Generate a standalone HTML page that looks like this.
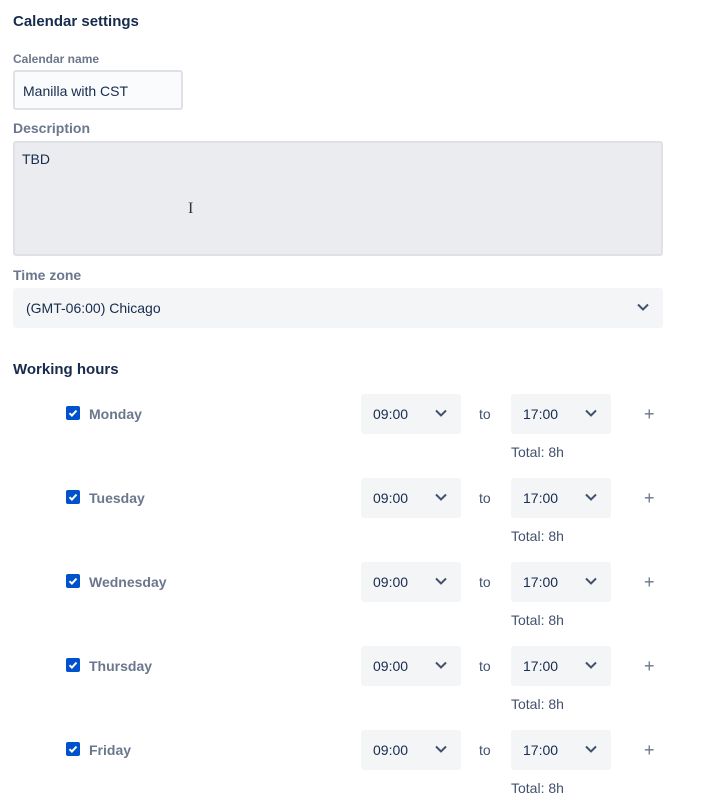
<!DOCTYPE html><html><head><style>
body{margin:0;width:708px;height:807px;background:#fff;font-family:"Liberation Sans",sans-serif;color:#172b4d;position:relative;overflow:hidden}
.a{position:absolute}
h{position:absolute;font-size:15px;font-weight:bold;color:#172b4d}
.lab{position:absolute;font-size:12px;font-weight:bold;color:#6b778c}
.sel{position:absolute;width:100px;height:40px;background:#f4f5f7;border-radius:3px;font-size:14px;line-height:40px}
.sel span{position:absolute;left:12px}
.sel svg,.tz svg{position:absolute;right:14px;top:15px}
.cb{position:absolute;left:66px;width:14px;height:14px;background:#0052cc;border-radius:2px}
.day{position:absolute;left:89px;font-size:14px;font-weight:bold;color:#6b778c}
.to{position:absolute;left:479px;font-size:14px;color:#42526e}
.tot{position:absolute;left:511px;font-size:14px;color:#42526e}
.plus{position:absolute;left:644px;font-size:18px;color:#6b778c}
</style></head><body>
<h style="left:13px;top:13px">Calendar settings</h>
<div class="lab" style="left:13px;top:52px;font-size:12px">Calendar name</div>
<div class="a" style="left:13px;top:70px;width:166px;height:36px;border:2px solid #dfe1e6;background:#fafbfc;border-radius:3px;font-size:14px;line-height:38px;text-indent:8px">Manilla with CST</div>
<div class="lab" style="left:13px;top:120px;font-size:14px">Description</div>
<div class="a" style="left:13px;top:141px;width:646px;height:111px;border:2px solid #dfe1e6;background:#ebecf0;border-radius:3px;font-size:14px"><div style="position:absolute;left:7px;top:8px">TBD</div><div style="position:absolute;left:173px;top:57px;color:#333;font-size:16px;font-family:'Liberation Serif',serif">I</div></div>
<div class="lab" style="left:13px;top:267px;font-size:14px">Time zone</div>
<div class="a tz" style="left:13px;top:288px;width:650px;height:40px;background:#f4f5f7;border-radius:3px;font-size:14px;line-height:40px"><span style="position:absolute;left:13px">(GMT-06:00) Chicago</span><svg width="12" height="8" viewBox="0 0 12 8"><path d="M1 1.5l5 5 5-5" stroke="#42526e" stroke-width="2" fill="none"/></svg></div>
<h style="left:13px;top:361px">Working hours</h>
<div id="rows"></div>
<script>
var d=["Monday","Tuesday","Wednesday","Thursday","Friday"],h="";
var ck='<svg width="14" height="14" viewBox="0 0 14 14"><path d="M3.5 7.2l2.4 2.4 4.6-5" stroke="#fff" stroke-width="2" fill="none"/></svg>';
var ch='<svg width="12" height="8" viewBox="0 0 12 8"><path d="M1 1.5l5 5 5-5" stroke="#42526e" stroke-width="2" fill="none"/></svg>';
d.forEach(function(n,i){var y=394+i*84;
h+='<div class="cb" style="top:'+(y+12)+'px">'+ck+'</div><div class="day" style="top:'+(y+12)+'px">'+n+'</div>'+
'<div class="sel" style="left:361px;top:'+y+'px"><span>09:00</span>'+ch+'</div><div class="to" style="top:'+(y+12)+'px">to</div>'+
'<div class="sel" style="left:511px;top:'+y+'px"><span>17:00</span>'+ch+'</div><div class="plus" style="top:'+(y+10)+'px">+</div>'+
'<div class="tot" style="top:'+(y+50)+'px">Total: 8h</div>';});
document.getElementById("rows").innerHTML=h;
</script>
</body></html>
